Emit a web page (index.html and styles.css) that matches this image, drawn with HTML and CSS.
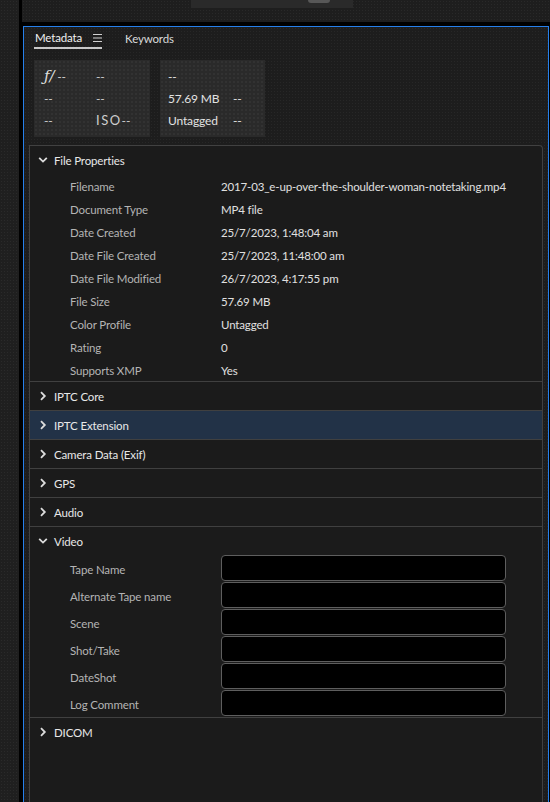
FILE: index.html
```html
<!DOCTYPE html>
<html lang="en">
<head>
    <meta charset="UTF-8">
    <meta name="viewport" content="width=device-width, initial-scale=1.0">
    <title>Metadata</title>
    <link rel="stylesheet" href="styles.css">
</head>
<body>
    <div class="frame">
        <div class="toolbar">
            <div class="scrub"><div class="thumb"></div></div>
        </div>

        <div class="panel">
            <div class="tabs">
                <div class="tab active">
                    Metadata
                    <svg class="menu-icon" width="9" height="8" viewBox="0 0 9 8">
                        <path d="M0 0.5H9M0 4H9M0 7.5H9" stroke="#d0d0d0" stroke-width="1"/>
                    </svg>
                </div>
                <div class="tab">Keywords</div>
            </div>

            <div class="summary">
                <div class="card card-camera">
                    <span><span class="fstop">ƒ/</span> --</span><span>--</span>
                    <span>--</span><span>--</span>
                    <span>--</span><span><span class="iso">ISO</span>--</span>
                </div>
                <div class="card card-file">
                    <span>--</span><span></span>
                    <span>57.69 MB</span><span>--</span>
                    <span>Untagged</span><span>--</span>
                </div>
            </div>

            <div class="props">
                <div class="group open">
                    <div class="group-head">
                        <svg class="chevron" width="10" height="10" viewBox="0 0 10 10"><path d="M1.2 2.8L5 6.6L8.8 2.8" fill="none" stroke="#dcdcdc" stroke-width="1.8"/></svg>
                        File Properties
                    </div>
                    <div class="field"><span class="label">Filename</span><span class="value">2017-03_e-up-over-the-shoulder-woman-notetaking.mp4</span></div>
                    <div class="field"><span class="label">Document Type</span><span class="value">MP4 file</span></div>
                    <div class="field"><span class="label">Date Created</span><span class="value">25/7/2023, 1:48:04 am</span></div>
                    <div class="field"><span class="label">Date File Created</span><span class="value">25/7/2023, 11:48:00 am</span></div>
                    <div class="field"><span class="label">Date File Modified</span><span class="value">26/7/2023, 4:17:55 pm</span></div>
                    <div class="field"><span class="label">File Size</span><span class="value">57.69 MB</span></div>
                    <div class="field"><span class="label">Color Profile</span><span class="value">Untagged</span></div>
                    <div class="field"><span class="label">Rating</span><span class="value">0</span></div>
                    <div class="field"><span class="label">Supports XMP</span><span class="value">Yes</span></div>
                </div>

                <div class="group">
                    <div class="group-head">
                        <svg class="chevron" width="10" height="10" viewBox="0 0 10 10"><path d="M3 1.2L6.8 5L3 8.8" fill="none" stroke="#dcdcdc" stroke-width="1.8"/></svg>
                        IPTC Core
                    </div>
                </div>
                <div class="group selected">
                    <div class="group-head">
                        <svg class="chevron" width="10" height="10" viewBox="0 0 10 10"><path d="M3 1.2L6.8 5L3 8.8" fill="none" stroke="#dcdcdc" stroke-width="1.8"/></svg>
                        IPTC Extension
                    </div>
                </div>
                <div class="group">
                    <div class="group-head">
                        <svg class="chevron" width="10" height="10" viewBox="0 0 10 10"><path d="M3 1.2L6.8 5L3 8.8" fill="none" stroke="#dcdcdc" stroke-width="1.8"/></svg>
                        Camera Data (Exif)
                    </div>
                </div>
                <div class="group">
                    <div class="group-head">
                        <svg class="chevron" width="10" height="10" viewBox="0 0 10 10"><path d="M3 1.2L6.8 5L3 8.8" fill="none" stroke="#dcdcdc" stroke-width="1.8"/></svg>
                        GPS
                    </div>
                </div>
                <div class="group">
                    <div class="group-head">
                        <svg class="chevron" width="10" height="10" viewBox="0 0 10 10"><path d="M3 1.2L6.8 5L3 8.8" fill="none" stroke="#dcdcdc" stroke-width="1.8"/></svg>
                        Audio
                    </div>
                </div>

                <div class="group open">
                    <div class="group-head">
                        <svg class="chevron" width="10" height="10" viewBox="0 0 10 10"><path d="M1.2 2.8L5 6.6L8.8 2.8" fill="none" stroke="#dcdcdc" stroke-width="1.8"/></svg>
                        Video
                    </div>
                    <div class="field input-field"><span class="label">Tape Name</span><input type="text"></div>
                    <div class="field input-field"><span class="label">Alternate Tape name</span><input type="text"></div>
                    <div class="field input-field"><span class="label">Scene</span><input type="text"></div>
                    <div class="field input-field"><span class="label">Shot/Take</span><input type="text"></div>
                    <div class="field input-field"><span class="label">DateShot</span><input type="text"></div>
                    <div class="field input-field"><span class="label">Log Comment</span><input type="text"></div>
                </div>

                <div class="group last">
                    <div class="group-head">
                        <svg class="chevron" width="10" height="10" viewBox="0 0 10 10"><path d="M3 1.2L6.8 5L3 8.8" fill="none" stroke="#dcdcdc" stroke-width="1.8"/></svg>
                        DICOM
                    </div>
                </div>
            </div>
        </div>
    </div>
</body>
</html>
```

FILE: styles.css
```css
html, body {
    height: 100%;
}
body {
    margin: 0;
    overflow: hidden;
    font-family: Lato, "Noto Sans", sans-serif;
    font-size: 11.5px;
    letter-spacing: -0.15px;
    color: #dcdcdc;
    background-color: #1f1f1f;
    background-image: radial-gradient(circle, rgba(255,255,255,0.05) 0.7px, transparent 0.8px);
    background-size: 3px 3px;
}
.frame {
    margin-left: 19px;
    height: 100%;
    background-color: #000;
    padding-left: 4px;
    display: flex;
    flex-direction: column;
}
.toolbar {
    height: 22px;
    margin-left: -1px;
    margin-bottom: 4px;
    background-color: #1e1e1e;
    background-image: radial-gradient(circle, rgba(255,255,255,0.05) 0.7px, transparent 0.8px);
    background-size: 3px 3px;
    flex-shrink: 0;
}
.scrub {
    margin-left: 169px;
    width: 162px;
    height: 8px;
    background-color: #2a2a2a;
    position: relative;
}
.thumb {
    position: absolute;
    left: 117px;
    top: 0;
    width: 22px;
    height: 3px;
    background-color: #575757;
    border-radius: 0 0 4px 4px;
}
.panel {
    flex: 1;
    width: 526px;
    box-sizing: border-box;
    border: 1px solid #2680eb;
    border-bottom: none;
    background-color: #1d1d1d;
    background-image: radial-gradient(circle, rgba(255,255,255,0.045) 0.7px, transparent 0.8px);
    background-size: 3px 3px;
    display: flex;
    flex-direction: column;
}
.tabs {
    display: flex;
    height: 22px;
    align-items: stretch;
}
.tab {
    display: flex;
    align-items: center;
    color: #dadada;
    font-size: 11.5px;
}
.tab.active {
    margin-left: 10px;
    padding: 1px 0 0 1px;
    border-bottom: 2px solid #c8c8c8;
    color: #f0f0f0;
}
.menu-icon {
    margin-left: 11px;
}
.tab + .tab {
    margin-left: 23px;
    padding-top: 1px;
}
.summary {
    display: flex;
    gap: 10px;
    margin: 11px 0 0 10px;
}
.card {
    display: grid;
    grid-auto-rows: 22px;
    align-items: center;
    height: 77px;
    box-sizing: border-box;
    padding-top: 5px;
    background-color: #2a2a2a;
    background-image: radial-gradient(circle, rgba(255,255,255,0.04) 0.7px, transparent 0.8px);
    background-size: 4px 4px;
    color: #cfcfcf;
    font-size: 12px;
}
.card-camera {
    width: 116px;
    padding-left: 10px;
    grid-template-columns: 52px auto;
}
.card-file {
    width: 105px;
    padding-left: 8px;
    grid-template-columns: 65px auto;
    color: #e2e2e2;
}
.fstop {
    font-family: "DejaVu Serif", serif;
    font-style: italic;
    font-size: 15px;
    color: #dedede;
}
.iso {
    letter-spacing: 1.5px;
    font-size: 13px;
}
.props {
    flex: 1;
    margin: 8px 5px 0 5px;
    border: 1px solid #414141;
    border-bottom: none;
    border-radius: 0 4px 0 0;
    background-color: #1b1b1b;
}
.group {
    border-bottom: 1px solid #404040;
}
.group.last {
    border-bottom: none;
}
.group-head {
    height: 28px;
    display: flex;
    align-items: center;
    padding-left: 8px;
    color: #e8e8e8;
}
.chevron {
    margin-right: 6px;
}
.group.selected {
    background-color: #223247;
}
.field {
    display: grid;
    grid-template-columns: 151px auto;
    align-items: center;
    height: 23px;
    padding-left: 40px;
    padding-top: 1px;
    box-sizing: border-box;
}
.label {
    color: #b4b4b4;
}
.value {
    color: #e0e0e0;
    white-space: nowrap;
}
.input-field {
    height: 27px;
    padding-top: 0;
}
.input-field .label {
    padding-top: 1px;
}
.input-field input {
    width: 285px;
    height: 26px;
    box-sizing: border-box;
    margin: 0;
    border: 1px solid #5e5e5e;
    border-radius: 4px;
    background-color: #000;
    color: #e0e0e0;
    outline: none;
    align-self: start;
}
```
